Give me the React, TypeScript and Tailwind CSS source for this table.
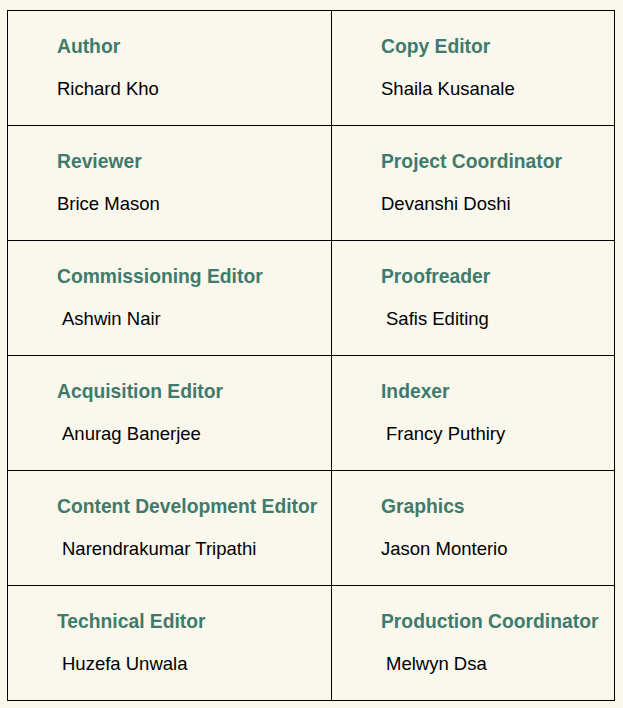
import React from "react";

type Cell = { role: string; name: string; indent?: boolean };

const rows: [Cell, Cell][] = [
  [
    { role: "Author", name: "Richard Kho" },
    { role: "Copy Editor", name: "Shaila Kusanale" },
  ],
  [
    { role: "Reviewer", name: "Brice Mason" },
    { role: "Project Coordinator", name: "Devanshi Doshi" },
  ],
  [
    { role: "Commissioning Editor", name: "Ashwin Nair", indent: true },
    { role: "Proofreader", name: "Safis Editing", indent: true },
  ],
  [
    { role: "Acquisition Editor", name: "Anurag Banerjee", indent: true },
    { role: "Indexer", name: "Francy Puthiry", indent: true },
  ],
  [
    { role: "Content Development Editor", name: "Narendrakumar Tripathi", indent: true },
    { role: "Graphics", name: "Jason Monterio" },
  ],
  [
    { role: "Technical Editor", name: "Huzefa Unwala", indent: true },
    { role: "Production Coordinator", name: "Melwyn Dsa", indent: true },
  ],
];

function CellView({ c }: { c: Cell }) {
  return (
    <div className="bg-[#faf7ed] h-[114px] pl-[49px] pb-[2px] flex flex-col justify-center gap-[21px]">
      <div className="text-[19.3px] leading-[21px] font-bold text-[#3f7b6b] whitespace-nowrap">{c.role}</div>
      <div className={`text-[18.5px] leading-[21px] text-black whitespace-nowrap ${c.indent ? "pl-[5px]" : ""}`}>
        {c.name}
      </div>
    </div>
  );
}

export default function App() {
  return (
    <div
      className="w-[623px] h-[708px] bg-[#faf7ed] pt-[10px] pl-[7px]"
      style={{ fontFamily: '"Liberation Sans", Arial, sans-serif' }}
    >
      <div className="w-[608px] grid grid-cols-[323px_282px] gap-px bg-black border border-black">
        {rows.map((r, i) => (
          <React.Fragment key={i}>
            <CellView c={r[0]} />
            <CellView c={r[1]} />
          </React.Fragment>
        ))}
      </div>
    </div>
  );
}
